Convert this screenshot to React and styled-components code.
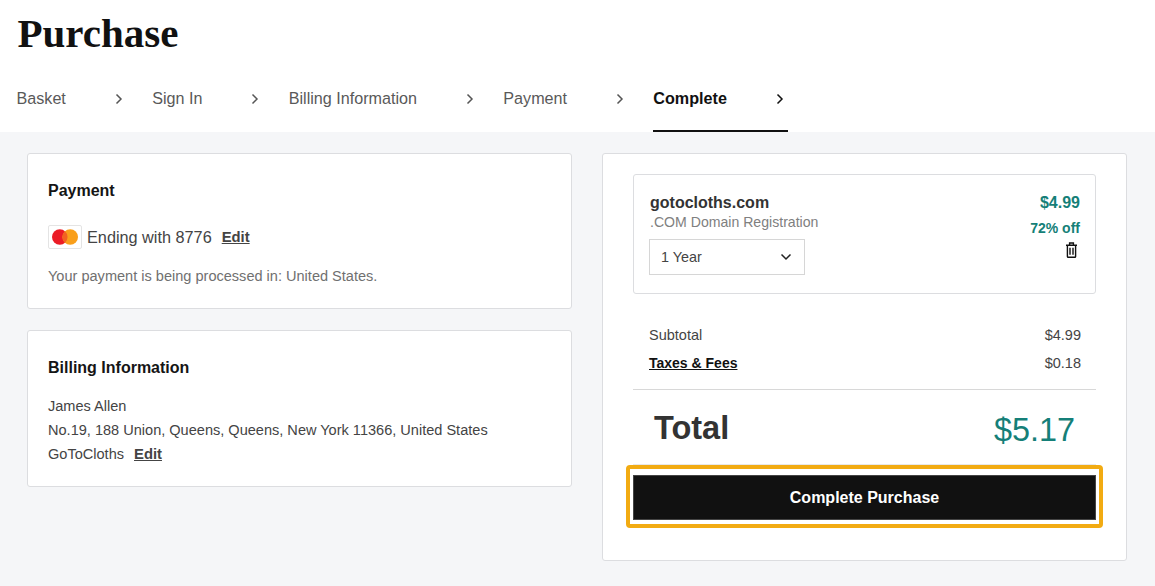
import React from "react";
import styled, { createGlobalStyle } from "styled-components";

const Global = createGlobalStyle`
  html, body { margin: 0; padding: 0; background: #fff; }
  body { font-family: "Liberation Sans", Arial, sans-serif; color: #333; }
`;

const Page = styled.div`
  width: 1155px;
  height: 586px;
  overflow: hidden;
  display: flex;
  flex-direction: column;
`;
const Header = styled.header`
  height: 132px;
  background: #fff;
  padding: 0 0 0 16.5px;
  box-sizing: border-box;
`;
const Title = styled.h1`
  margin: 0 0 0 1px;
  height: 66px;
  font-family: "Liberation Serif", "Times New Roman", serif;
  font-weight: 700;
  font-size: 41px;
  line-height: 66px;
  color: #111;
`;
const Steps = styled.nav`
  display: flex;
  gap: 25.3px;
  height: 66px;
`;
const Step = styled.div`
  display: flex;
  align-items: center;
  justify-content: space-between;
  gap: 48px;
  box-sizing: border-box;
  height: 66px;
  padding: 1px 3px 0 0;
  font-size: 16.15px;
  color: ${(p) => (p.$active ? "#111" : "#595959")};
  font-weight: ${(p) => (p.$active ? 700 : 400)};
  border-bottom: 2px solid ${(p) => (p.$active ? "#111" : "transparent")};
`;
const Main = styled.main`
  flex: 1;
  background: #f5f6f8;
  display: grid;
  grid-template-columns: 545px 525px;
  column-gap: 30px;
  padding: 21px 0 0 27px;
  align-items: start;
`;
const Left = styled.div`
  display: flex;
  flex-direction: column;
  gap: 21px;
`;
const Card = styled.section`
  background: #fff;
  border: 1px solid #dcdde0;
  border-radius: 3px;
  box-sizing: border-box;
  height: ${(p) => p.$h}px;
  padding: 26px 20px 0;
`;
const CardTitle = styled.h2`
  margin: 0;
  font-size: 16px;
  line-height: 22px;
  font-weight: 700;
  color: #151515;
`;
const PayLine = styled.div`
  display: flex;
  align-items: center;
  margin-top: 22px;
  font-size: 16.25px;
  color: #444;
  height: 26px;
`;
const CardMark = styled.span`
  width: 34px;
  height: 24px;
  box-sizing: border-box;
  border: 1px solid #e4e4e4;
  border-radius: 2px;
  margin-right: 5px;
  display: flex;
  align-items: center;
  justify-content: center;
`;
const EditLink = styled.a`
  font-size: 14.8px;
  font-weight: 700;
  color: #444;
  text-decoration: underline;
  margin-left: 10px;
`;
const Note = styled.p`
  margin: 16px 0 0;
  font-size: 14.55px;
  line-height: 20px;
  color: #707070;
`;
const Address = styled.div`
  margin-top: 15px;
  font-size: 14.55px;
  line-height: 24px;
  color: #444;
`;
const Summary = styled.div`
  background: #fff;
  border: 1px solid #dcdde0;
  border-radius: 3px;
  box-sizing: border-box;
  height: 408px;
  padding: 20px 30px 0;
`;
const Item = styled.div`
  height: 120px;
  box-sizing: border-box;
  border: 1px solid #dcdde0;
  border-radius: 3px;
  padding: 18px 15px 0;
  display: flex;
  justify-content: space-between;
`;
const ItemInfo = styled.div`
  display: flex;
  flex-direction: column;
`;
const Domain = styled.div`
  font-size: 16px;
  font-weight: 700;
  line-height: 20px;
  margin-left: 1px;
  color: #333;
`;
const Product = styled.div`
  font-size: 14.1px;
  line-height: 20px;
  margin: -1px 0 0 1px;
  color: #808080;
`;
const Select = styled.div`
  width: 156px;
  height: 36px;
  margin-top: 7px;
  box-sizing: border-box;
  border: 1px solid #d6d6d6;
  padding: 0 12px 0 11px;
  display: flex;
  align-items: center;
  justify-content: space-between;
  font-size: 14.4px;
  color: #444;
`;
const Prices = styled.div`
  display: flex;
  flex-direction: column;
  align-items: flex-end;
`;
const Price = styled.div`
  font-size: 16px;
  line-height: 20px;
  font-weight: 700;
  color: #157f78;
`;
const Off = styled.div`
  font-size: 14px;
  line-height: 20px;
  margin-top: 5px;
  font-weight: 700;
  color: #157f78;
`;
const Trash = styled.span`
  display: flex;
  margin: 4px 3px 0 0;
  height: 16px;
  color: #111;
`;
const Rows = styled.div`
  padding: 27px 15px 12px 16px;
  border-bottom: 1px solid #d8d8d8;
`;
const Row = styled.div`
  display: flex;
  justify-content: space-between;
  height: 28px;
  line-height: 28px;
  font-size: 14.5px;
  color: #444;
`;
const Taxes = styled.a`
  font-size: 14px;
  font-weight: 700;
  color: #111;
  text-decoration: underline;
`;
const TotalRow = styled.div`
  display: flex;
  justify-content: space-between;
  align-items: center;
  height: 75px;
  box-sizing: border-box;
  padding: 2px 21px 0;
  border-bottom: 1px solid #e8e8e8;
`;
const TotalLabel = styled.div`
  font-size: 32.5px;
  font-weight: 700;
  color: #333;
`;
const TotalValue = styled.div`
  font-size: 32.4px;
  color: #157f78;
  margin-top: 5px;
`;
const Focus = styled.div`
  margin: 0 -7px;
  height: 63px;
  box-sizing: border-box;
  border: 4px solid #f2ab12;
  border-radius: 4px;
  padding: 6px 3px 4px;
  background: #fff;
`;
const Primary = styled.button`
  width: 100%;
  height: 100%;
  background: #111;
  border: 1px solid #444;
  color: #fff;
  font-family: inherit;
  font-size: 16px;
  font-weight: 700;
`;

const Chevron = ({ color }) => (
  <svg width="10" height="14" viewBox="0 0 10 14" fill="none" stroke={color} strokeWidth="1.5">
    <path d="M2.5 2.5 7 7l-4.5 4.5" />
  </svg>
);

const steps = ["Basket", "Sign In", "Billing Information", "Payment", "Complete"];

export default function App() {
  return (
    <Page>
      <Global />
      <Header>
        <Title>Purchase</Title>
        <Steps>
          {steps.map((s) => (
            <Step key={s} $active={s === "Complete"}>
              {s}
              <Chevron color={s === "Complete" ? "#111" : "#555"} />
            </Step>
          ))}
        </Steps>
      </Header>
      <Main>
        <Left>
          <Card $h={156}>
            <CardTitle>Payment</CardTitle>
            <PayLine>
              <CardMark>
                <svg width="26" height="16" viewBox="0 0 26 16">
                  <circle cx="7.8" cy="8" r="7.8" fill="#eb1c26" />
                  <circle cx="18.2" cy="8" r="7.8" fill="#f99f1b" />
                  <path d="M13 2.2a7.8 7.8 0 0 1 0 11.6 7.8 7.8 0 0 1 0-11.6z" fill="#f26122" />
                </svg>
              </CardMark>
              Ending with 8776
              <EditLink>Edit</EditLink>
            </PayLine>
            <Note>Your payment is being processed in: United States.</Note>
          </Card>
          <Card $h={157}>
            <CardTitle>Billing Information</CardTitle>
            <Address>
              <div>James Allen</div>
              <div>No.19, 188 Union, Queens, Queens, New York 11366, United States</div>
              <div>
                GoToCloths
                <EditLink>Edit</EditLink>
              </div>
            </Address>
          </Card>
        </Left>
        <Summary>
          <Item>
            <ItemInfo>
              <Domain>gotocloths.com</Domain>
              <Product>.COM Domain Registration</Product>
              <Select>
                1 Year
                <svg width="12" height="8" viewBox="0 0 12 8" fill="none" stroke="#222" strokeWidth="1.5">
                  <path d="M1.5 1.5 6 6l4.5-4.5" />
                </svg>
              </Select>
            </ItemInfo>
            <Prices>
              <Price>$4.99</Price>
              <Off>72% off</Off>
              <Trash>
                <svg width="11" height="16" viewBox="0 0 11 16" fill="none" stroke="currentColor" strokeWidth="1.4">
                  <path d="M0 3.2h11M3.6 3V1h3.8v2M1.4 3.2v11.3a.8.8 0 0 0 .8.8h6.6a.8.8 0 0 0 .8-.8V3.2M4 5.8v7M7 5.8v7" />
                </svg>
              </Trash>
            </Prices>
          </Item>
          <Rows>
            <Row>
              <span>Subtotal</span>
              <span>$4.99</span>
            </Row>
            <Row>
              <Taxes>Taxes &amp; Fees</Taxes>
              <span>$0.18</span>
            </Row>
          </Rows>
          <TotalRow>
            <TotalLabel>Total</TotalLabel>
            <TotalValue>$5.17</TotalValue>
          </TotalRow>
          <Focus>
            <Primary>Complete Purchase</Primary>
          </Focus>
        </Summary>
      </Main>
    </Page>
  );
}
